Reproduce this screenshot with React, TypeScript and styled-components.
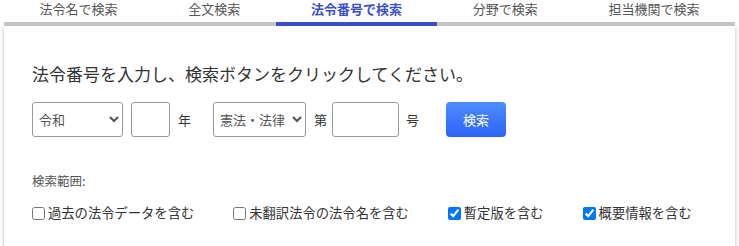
import styled, { createGlobalStyle } from 'styled-components';

const GlobalStyle = createGlobalStyle`
  body {
    margin: 0;
    background: #ffffff;
    font-family: "Noto Sans CJK JP", "Noto Sans", sans-serif;
    color: #333333;
  }
`;

const tabs = ['法令名で検索', '全文検索', '法令番号で検索', '分野で検索', '担当機関で検索'];

const options = [
  { label: '過去の法令データを含む', checked: false },
  { label: '未翻訳法令の法令名を含む', checked: false },
  { label: '暫定版を含む', checked: true },
  { label: '概要情報を含む', checked: true },
];

const App = () => {
  return (
    <>
      <GlobalStyle />
      <TabBar>
        {tabs.map((t, i) => (
          <Tab key={t} $active={i === 2}>
            {t}
          </Tab>
        ))}
      </TabBar>
      <Panel>
        <Lead>法令番号を入力し、検索ボタンをクリックしてください。</Lead>
        <FormRow>
          <Select $width={91} defaultValue="令和">
            <option>令和</option>
            <option>平成</option>
            <option>昭和</option>
          </Select>
          <NumInput $width={39} $gap={8} />
          <Unit $gap={8} $after={22}>年</Unit>
          <Select $width={93} defaultValue="憲法・法律">
            <option>憲法・法律</option>
            <option>政令</option>
          </Select>
          <Unit $gap={8} $after={0}>第</Unit>
          <NumInput $width={67} $gap={5} />
          <Unit $gap={7} $after={22}>号</Unit>
          <SearchButton>検索</SearchButton>
        </FormRow>
        <RangeLabel>検索範囲:</RangeLabel>
        <CheckRow>
          {options.map((o) => (
            <CheckLabel key={o.label}>
              <Check type="checkbox" defaultChecked={o.checked} />
              {o.label}
            </CheckLabel>
          ))}
        </CheckRow>
      </Panel>
    </>
  );
};

const TabBar = styled.div`
  display: flex;
  margin: 0 4px;
`;

const Tab = styled.div<{ $active?: boolean }>`
  flex: 1 1 auto;
  height: 22px;
  line-height: 17px;
  text-align: center;
  font-size: 13px;
  white-space: nowrap;
  color: ${({ $active }) => ($active ? '#3a4fc8' : '#555555')};
  font-weight: ${({ $active }) => ($active ? 700 : 400)};
  border-bottom: 4px solid ${({ $active }) => ($active ? '#3a4fcf' : '#c4c4c4')};
`;

const Panel = styled.div`
  margin: 0 4px;
  padding: 36px 28px 30px;
  background: #ffffff;
  box-shadow: 0 1px 4px rgba(0, 0, 0, 0.28);
  min-height: 200px;
`;

const Lead = styled.p`
  margin: 0 0 16px;
  font-size: 17px;
  line-height: 24px;
  color: #333333;
`;

const FormRow = styled.div`
  display: flex;
  align-items: center;
  height: 35px;
`;

const Select = styled.select<{ $width: number }>`
  width: ${({ $width }) => $width}px;
  height: 35px;
  box-sizing: border-box;
  border: 1px solid #999999;
  border-radius: 3px;
  padding: 0 2px;
  font-family: inherit;
  font-size: 13px;
  color: #555555;
  background: #ffffff;
`;

const NumInput = styled.input<{ $width: number; $gap: number }>`
  width: ${({ $width }) => $width}px;
  height: 35px;
  box-sizing: border-box;
  margin-left: ${({ $gap }) => $gap}px;
  border: 1px solid #999999;
  border-radius: 3px;
  font-size: 13px;
`;

const Unit = styled.span<{ $gap: number; $after: number }>`
  font-size: 13px;
  color: #333333;
  margin: 0 ${({ $after }) => $after}px 0 ${({ $gap }) => $gap}px;
`;

const SearchButton = styled.button`
  width: 60px;
  height: 35px;
  margin-left: 5px;
  border: none;
  border-radius: 4px;
  background: linear-gradient(#4d8dff, #2c63f6);
  color: #ffffff;
  font-family: inherit;
  font-size: 13px;
`;

const RangeLabel = styled.div`
  margin-top: 35px;
  font-size: 12.5px;
  line-height: 18px;
  color: #555555;
`;

const CheckRow = styled.div`
  display: flex;
  margin-top: 14px;
  gap: 39px;
`;

const CheckLabel = styled.label`
  display: flex;
  align-items: center;
  font-size: 13.3px;
  line-height: 18px;
  color: #333333;
`;

const Check = styled.input`
  width: 13px;
  height: 13px;
  margin: 0 3px 0 0;
`;

export default App;
